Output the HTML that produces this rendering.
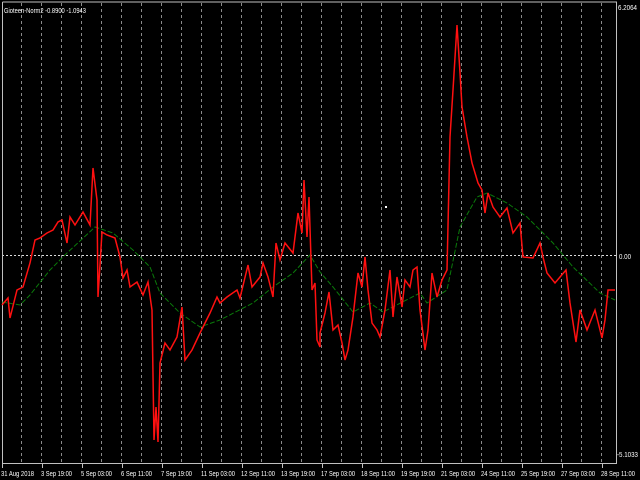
<!DOCTYPE html>
<html><head><style>
body{margin:0;background:#000;width:640px;height:480px;overflow:hidden;font-family:"Liberation Sans",sans-serif}
svg{position:absolute;left:0;top:0}
</style></head><body>
<svg width="640" height="480" xmlns="http://www.w3.org/2000/svg">
<rect width="640" height="480" fill="#000"/>
<g stroke="#8a8a8a" stroke-width="1" stroke-dasharray="3,3">
<path d="M21.5 3V462M41.5 3V462M61.5 3V462M81.5 3V462M101.5 3V462M121.5 3V462M141.5 3V462M161.5 3V462M181.5 3V462M201.5 3V462M221.5 3V462M241.5 3V462M261.5 3V462M281.5 3V462M301.5 3V462M321.5 3V462M341.5 3V462M361.5 3V462M381.5 3V462M401.5 3V462M421.5 3V462M441.5 3V462M461.5 3V462M481.5 3V462M501.5 3V462M521.5 3V462M541.5 3V462M561.5 3V462M581.5 3V462M601.5 3V462"/>
</g>
<path d="M2 255.5H616" stroke="#ddd" stroke-dasharray="2,2"/>
<path d="M2.5 2V463.5H616.5V2H2.5" fill="none" stroke="#c0c0c0"/>
<g stroke="#c0c0c0"><path d="M2.5 463V468M42.5 463V468M82.5 463V468M122.5 463V468M162.5 463V468M202.5 463V468M242.5 463V468M282.5 463V468M322.5 463V468M362.5 463V468M402.5 463V468M442.5 463V468M482.5 463V468M522.5 463V468M562.5 463V468M602.5 463V468"/></g>
<polyline fill="none" stroke="#0a7a0a" stroke-width="1" stroke-dasharray="5,2" points="2,302 20,305 30,295 50,270 67,253 95,227 113,233 133,250 150,267 160,293 180,313 200,327 220,320 253,303 273,287 293,273 310,255 320,272 333,287 353,312 370,303 383,312 420,293 427,303 447,290 460,227 477,197 487,193 507,203 527,217 553,243 573,267 600,293 615,300"/>
<polyline fill="none" stroke="#ff1010" stroke-width="1.5" points="2,305 8,298 10,318 17,290 23,287 30,263 35,240 40,238 47,233 53,230 58,222 62,220 67,243 70,217 75,225 83,212 90,225 93,168 97,200 98,297 102,232 107,235 115,238 120,257 123,278 127,270 130,287 137,282 143,295 148,282 152,310 154,440 156,407 158,442 160,363 165,343 170,350 177,337 182,307 185,360 192,350 200,333 210,313 217,297 220,303 227,297 237,290 240,298 248,265 252,287 260,277 263,263 268,277 273,297 276,243 280,260 285,243 293,253 298,213 302,233 304,180 307,237 309,197 312,290 315,283 317,340 320,347 320,333 325,313 329,292 333,330 338,325 342,343 345,360 348,350 353,317 358,273 362,287 365,257 368,290 372,323 377,330 380,337 385,310 390,270 393,317 397,277 402,307 405,280 410,287 413,270 417,267 420,310 425,350 428,330 432,273 437,297 442,280 447,270 450,137 453,90 457,25 460,73 462,107 467,137 472,163 478,183 482,190 485,213 488,193 493,207 500,217 507,208 513,233 520,223 523,257 533,258 540,243 543,257 547,273 555,283 560,277 566,270 570,303 576,342 580,310 587,330 595,310 602,338 605,320 608,290 615,290"/>
<rect x="385" y="206" width="2" height="2" fill="#fff"/>
<g fill="#fff" font-family="Liberation Sans, sans-serif" font-size="7">
<text x="4" y="13" textLength="82" lengthAdjust="spacingAndGlyphs">Gioteen-Norm2 -0.8900 -1.0943</text>
<text x="618" y="10" textLength="19" lengthAdjust="spacingAndGlyphs">6.2064</text>
<text x="619" y="259" textLength="12" lengthAdjust="spacingAndGlyphs">0.00</text>
<text x="617" y="457" textLength="21" lengthAdjust="spacingAndGlyphs">-5.1033</text>
<g font-size="7" lengthAdjust="spacingAndGlyphs">
<text x="1" y="476" textLength="33" lengthAdjust="spacingAndGlyphs">31 Aug 2018</text>
<text x="41" y="476" textLength="31" lengthAdjust="spacingAndGlyphs">3 Sep 19:00</text>
<text x="81" y="476" textLength="31" lengthAdjust="spacingAndGlyphs">5 Sep 03:00</text>
<text x="121" y="476" textLength="31" lengthAdjust="spacingAndGlyphs">6 Sep 11:00</text>
<text x="161" y="476" textLength="31" lengthAdjust="spacingAndGlyphs">7 Sep 19:00</text>
<text x="201" y="476" textLength="34" lengthAdjust="spacingAndGlyphs">11 Sep 03:00</text>
<text x="241" y="476" textLength="34" lengthAdjust="spacingAndGlyphs">12 Sep 11:00</text>
<text x="281" y="476" textLength="34" lengthAdjust="spacingAndGlyphs">13 Sep 19:00</text>
<text x="321" y="476" textLength="34" lengthAdjust="spacingAndGlyphs">17 Sep 03:00</text>
<text x="361" y="476" textLength="34" lengthAdjust="spacingAndGlyphs">18 Sep 11:00</text>
<text x="401" y="476" textLength="34" lengthAdjust="spacingAndGlyphs">19 Sep 19:00</text>
<text x="441" y="476" textLength="34" lengthAdjust="spacingAndGlyphs">21 Sep 03:00</text>
<text x="481" y="476" textLength="34" lengthAdjust="spacingAndGlyphs">24 Sep 11:00</text>
<text x="521" y="476" textLength="34" lengthAdjust="spacingAndGlyphs">25 Sep 19:00</text>
<text x="561" y="476" textLength="34" lengthAdjust="spacingAndGlyphs">27 Sep 03:00</text>
<text x="601" y="476" textLength="34" lengthAdjust="spacingAndGlyphs">28 Sep 11:00</text>
</g></g>
</svg>
</body></html>
